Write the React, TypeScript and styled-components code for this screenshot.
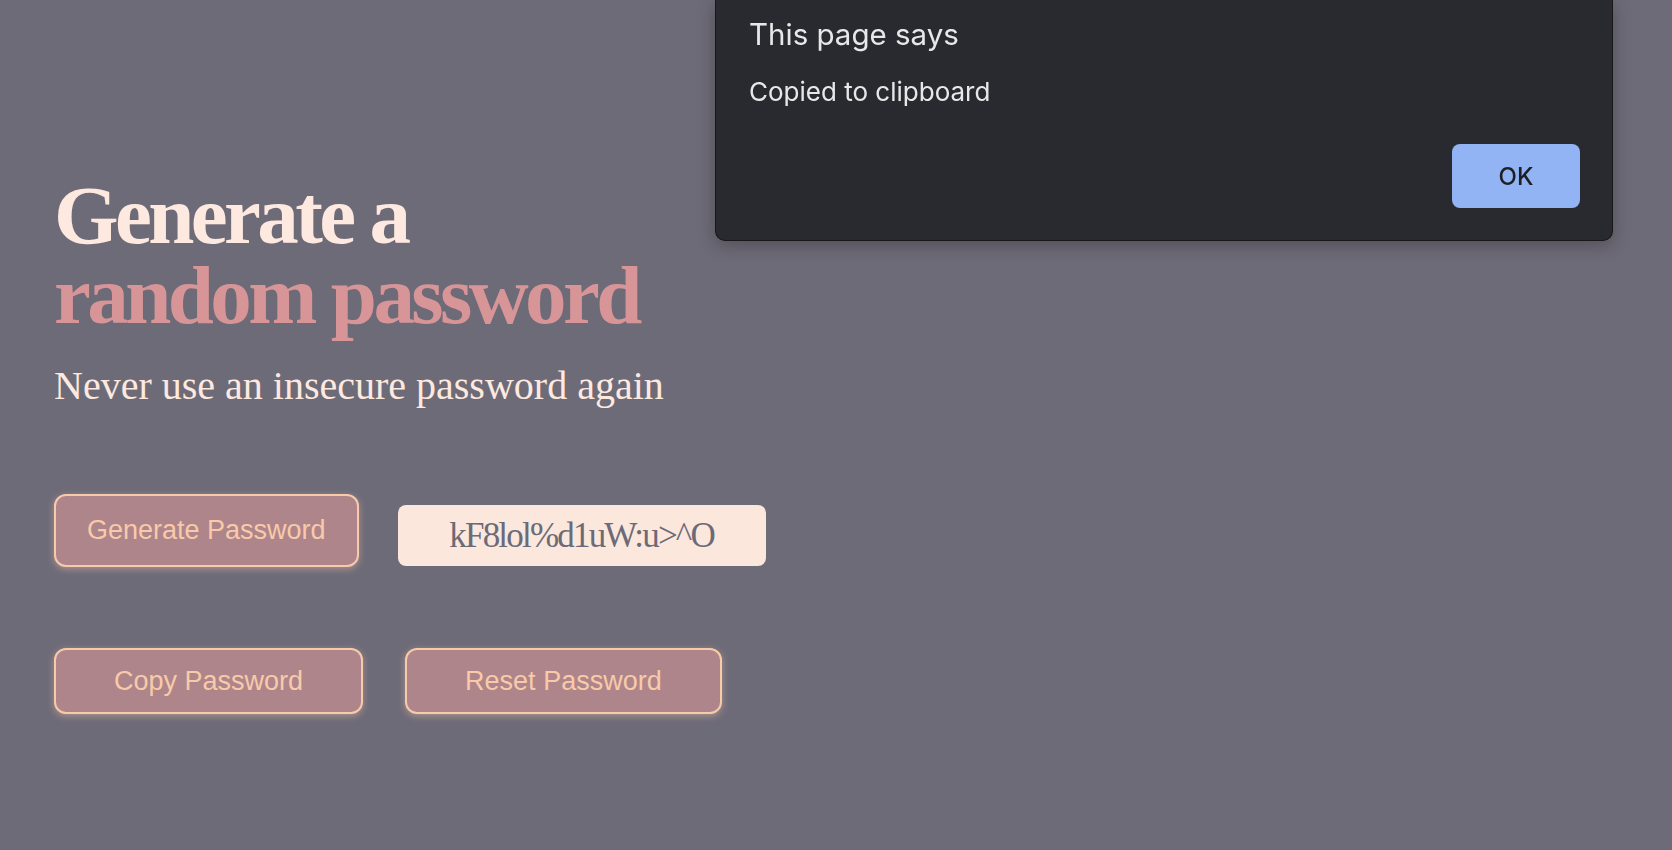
import React from "react";
import styled, { createGlobalStyle } from "styled-components";

const GlobalStyle = createGlobalStyle`
  html, body {
    margin: 0;
    padding: 0;
    background: #6e6b78;
  }
  body {
    font-family: "Liberation Serif", "Times New Roman", serif;
  }
`;

const Page = styled.main`
  min-height: 850px;
  box-sizing: border-box;
  padding: 175px 0 0 54px;
  display: flex;
  flex-direction: column;
  align-items: flex-start;
  background: #6e6b78;
`;

const Heading = styled.h1`
  margin: 0;
  font-family: "Liberation Serif", "Times New Roman", serif;
  font-weight: 700;
  font-size: 83px;
  line-height: 80px;
  letter-spacing: -3.6px;
  color: #fde9df;
`;

const Accent = styled.span`
  display: block;
  color: #d79598;
`;

const Subtitle = styled.p`
  margin: 28px 0 0;
  font-family: "Liberation Serif", "Times New Roman", serif;
  font-size: 40px;
  line-height: 46px;
  color: #fde9df;
`;

const Row = styled.div<{ $top: number; $gap: number; $align?: string }>`
  display: flex;
  align-items: ${(p) => p.$align || "flex-start"};
  gap: ${(p) => p.$gap}px;
  margin-top: ${(p) => p.$top}px;
`;

const Button = styled.button<{ $padX: number; $height: number }>`
  box-sizing: border-box;
  height: ${(p) => p.$height}px;
  padding: 0 ${(p) => p.$padX}px;
  border: 2px solid #f7caa9;
  border-radius: 12px;
  background: #ae858b;
  color: #f8caa9;
  font-family: "Liberation Sans", Arial, sans-serif;
  font-size: 27px;
  box-shadow: 0 2px 7px rgba(250, 200, 170, 0.45);
  cursor: pointer;
`;

const Output = styled.div`
  box-sizing: border-box;
  width: 368px;
  height: 61px;
  margin-bottom: 1px;
  border-radius: 8px;
  background: #fbe7dc;
  color: #6c6a77;
  display: flex;
  align-items: center;
  justify-content: center;
  font-family: "Liberation Serif", "Times New Roman", serif;
  font-size: 35px;
  letter-spacing: -1.8px;
`;

const Dialog = styled.div`
  position: fixed;
  top: 0;
  left: 715px;
  width: 898px;
  height: 241px;
  box-sizing: border-box;
  padding: 0 32px 32px 33px;
  background: #292a2f;
  border: 1px solid #18181b;
  border-top: none;
  border-radius: 0 0 10px 10px;
  box-shadow: 0 4px 18px rgba(0, 0, 0, 0.28);
  display: flex;
  flex-direction: column;
  font-family: Inter, "Noto Sans", sans-serif;
  color: #e8e8ea;
`;

const DialogTitle = styled.div`
  margin-top: 16px;
  font-size: 29.5px;
  line-height: 36px;
`;

const DialogBody = styled.div`
  margin-top: 24px;
  font-size: 26px;
  line-height: 32px;
`;

const DialogActions = styled.div`
  margin-top: auto;
  display: flex;
  justify-content: flex-end;
`;

const OkButton = styled.button`
  width: 128px;
  height: 64px;
  border: none;
  border-radius: 8px;
  background: #93b4f4;
  color: #1e1f24;
  font-family: Inter, "Noto Sans", sans-serif;
  font-size: 24px;
  font-weight: 500;
  cursor: pointer;
`;

export default function App() {
  return (
    <>
      <GlobalStyle />
      <Page>
        <Heading>
          Generate a
          <Accent>random password</Accent>
        </Heading>
        <Subtitle>Never use an insecure password again</Subtitle>
        <Row $top={85} $gap={39} $align="flex-end">
          <Button $padX={31} $height={73}>Generate Password</Button>
          <Output>kF8lol%d1uW:u&gt;^O</Output>
        </Row>
        <Row $top={81} $gap={42}>
          <Button $padX={58} $height={66}>Copy Password</Button>
          <Button $padX={58} $height={66}>Reset Password</Button>
        </Row>
      </Page>
      <Dialog role="alertdialog">
        <DialogTitle>This page says</DialogTitle>
        <DialogBody>Copied to clipboard</DialogBody>
        <DialogActions>
          <OkButton>OK</OkButton>
        </DialogActions>
      </Dialog>
    </>
  );
}
